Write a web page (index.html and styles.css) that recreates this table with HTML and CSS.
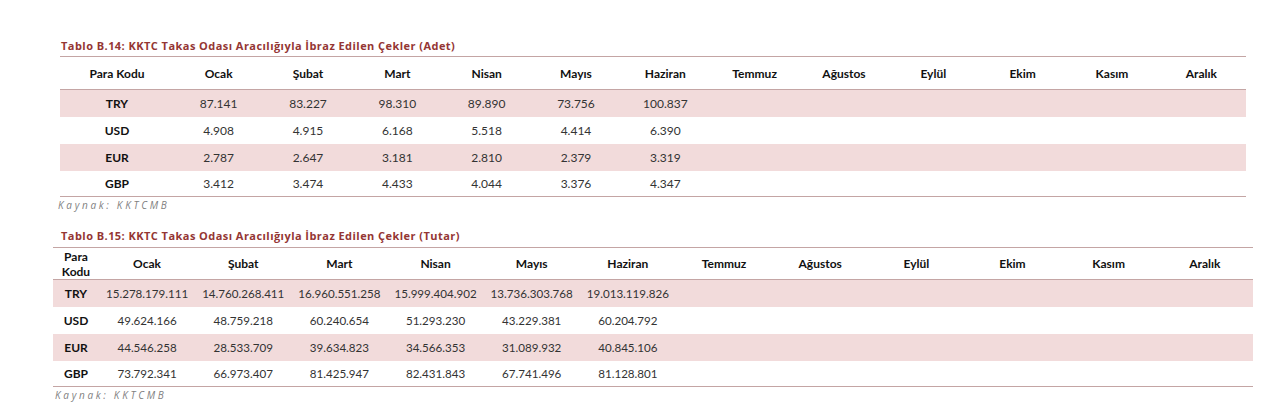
FILE: index.html
```html
<!DOCTYPE html>
<html lang="tr">
<head>
<meta charset="utf-8">
<title>KKTC Takas Odası</title>
<link rel="stylesheet" href="styles.css">
</head>
<body>
<div class="page">
  <section class="block block-adet">
    <div class="title">Tablo B.14: KKTC Takas Odası Aracılığıyla İbraz Edilen Çekler (Adet)</div>
    <table class="tbl tbl-adet">
      <colgroup>
        <col class="c-code">
        <col><col><col><col><col><col><col><col><col><col><col><col>
      </colgroup>
      <thead>
        <tr>
          <th>Para Kodu</th><th>Ocak</th><th>Şubat</th><th>Mart</th><th>Nisan</th><th>Mayıs</th><th>Haziran</th><th>Temmuz</th><th>Ağustos</th><th>Eylül</th><th>Ekim</th><th>Kasım</th><th>Aralık</th>
        </tr>
      </thead>
      <tbody>
        <tr class="pink"><td class="code">TRY</td><td>87.141</td><td>83.227</td><td>98.310</td><td>89.890</td><td>73.756</td><td>100.837</td><td></td><td></td><td></td><td></td><td></td><td></td></tr>
        <tr><td class="code">USD</td><td>4.908</td><td>4.915</td><td>6.168</td><td>5.518</td><td>4.414</td><td>6.390</td><td></td><td></td><td></td><td></td><td></td><td></td></tr>
        <tr class="pink"><td class="code">EUR</td><td>2.787</td><td>2.647</td><td>3.181</td><td>2.810</td><td>2.379</td><td>3.319</td><td></td><td></td><td></td><td></td><td></td><td></td></tr>
        <tr class="last"><td class="code">GBP</td><td>3.412</td><td>3.474</td><td>4.433</td><td>4.044</td><td>3.376</td><td>4.347</td><td></td><td></td><td></td><td></td><td></td><td></td></tr>
      </tbody>
    </table>
    <div class="source">Kaynak: KKTCMB</div>
  </section>

  <section class="block block-tutar">
    <div class="title">Tablo B.15: KKTC Takas Odası Aracılığıyla İbraz Edilen Çekler (Tutar)</div>
    <table class="tbl tbl-tutar">
      <colgroup>
        <col class="c-code">
        <col><col><col><col><col><col><col><col><col><col><col><col>
      </colgroup>
      <thead>
        <tr>
          <th>Para Kodu</th><th>Ocak</th><th>Şubat</th><th>Mart</th><th>Nisan</th><th>Mayıs</th><th>Haziran</th><th>Temmuz</th><th>Ağustos</th><th>Eylül</th><th>Ekim</th><th>Kasım</th><th>Aralık</th>
        </tr>
      </thead>
      <tbody>
        <tr class="pink"><td class="code">TRY</td><td>15.278.179.111</td><td>14.760.268.411</td><td>16.960.551.258</td><td>15.999.404.902</td><td>13.736.303.768</td><td>19.013.119.826</td><td></td><td></td><td></td><td></td><td></td><td></td></tr>
        <tr><td class="code">USD</td><td>49.624.166</td><td>48.759.218</td><td>60.240.654</td><td>51.293.230</td><td>43.229.381</td><td>60.204.792</td><td></td><td></td><td></td><td></td><td></td><td></td></tr>
        <tr class="pink"><td class="code">EUR</td><td>44.546.258</td><td>28.533.709</td><td>39.634.823</td><td>34.566.353</td><td>31.089.932</td><td>40.845.106</td><td></td><td></td><td></td><td></td><td></td><td></td></tr>
        <tr class="last"><td class="code">GBP</td><td>73.792.341</td><td>66.973.407</td><td>81.425.947</td><td>82.431.843</td><td>67.741.496</td><td>81.128.801</td><td></td><td></td><td></td><td></td><td></td><td></td></tr>
      </tbody>
    </table>
    <div class="source">Kaynak: KKTCMB</div>
  </section>
</div>
</body>
</html>
```

FILE: styles.css
```css
* { box-sizing: border-box; }

html, body {
  margin: 0;
  padding: 0;
  background: #ffffff;
}

.page {
  padding-top: 39px;
  display: flex;
  flex-direction: column;
}

.block {
  display: flex;
  flex-direction: column;
}

.title {
  font-family: "Open Sans", "DejaVu Sans", sans-serif;
  font-weight: 700;
  font-size: 11px;
  letter-spacing: 0.45px;
  line-height: 14px;
  color: #943634;
  padding-left: 61px;
}

.block-adet .title { margin-bottom: 3px; }
.block-tutar { margin-top: 16px; }
.block-tutar .title { margin-bottom: 4px; }

.tbl {
  border-collapse: collapse;
  table-layout: fixed;
  font-family: Lato, "Liberation Sans", sans-serif;
  font-size: 12px;
  color: #333333;
}

.tbl-adet { width: 1186px; margin-left: 60px; }
.tbl-adet .c-code { width: 114px; }

.tbl-tutar { width: 1200px; margin-left: 53px; }
.tbl-tutar .c-code { width: 46px; }
.tbl-tutar td { font-size: 11.6px; }

.tbl th {
  font-weight: 700;
  color: #111111;
  text-align: center;
  border-top: 1px solid #c4a5a4;
  border-bottom: 1px solid #c4a5a4;
  padding: 0;
  line-height: 15px;
}

.tbl-adet th { height: 33px; }
.tbl-tutar th { height: 32px; }

.tbl td {
  text-align: center;
  padding: 0;
  height: 27px;
  line-height: 15px;
}

.tbl td.code {
  font-weight: 700;
  color: #111111;
  font-size: 12px;
}

.tbl tr.pink td { background: #f2dbdb; }

.tbl tr.last td {
  height: 26px;
  border-bottom: 1px solid #c4a5a4;
}

.source {
  font-family: "Open Sans", "DejaVu Sans", sans-serif;
  font-style: italic;
  font-size: 10px;
  line-height: 16px;
  letter-spacing: 2.7px;
  color: #7f7f7f;
}

.block-adet .source { padding-left: 58px; }
.block-tutar .source { padding-left: 55px; }
```
